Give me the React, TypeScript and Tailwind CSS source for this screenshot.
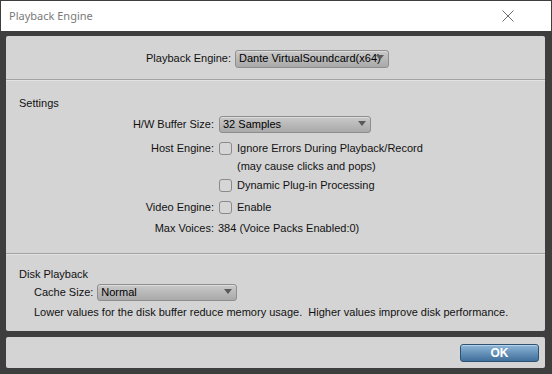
const Arrow = () => (
  <svg width="8" height="5" viewBox="0 0 8 5" className="absolute right-[4px] top-[4px]">
    <path d="M0 0 H8 L4 5 Z" fill="#5a5a5a" />
  </svg>
);

const Dropdown = ({ value, className }: { value: string; className: string }) => (
  <div
    className={`relative flex items-center pl-[3px] rounded-[3px] border border-[#8e8e8e] bg-gradient-to-b from-[#c9c9c9] to-[#a9a9a9] text-black whitespace-nowrap overflow-hidden shadow-[inset_0_1px_0_#dcdcdc] ${className}`}
  >
    <span className="leading-none">{value}</span>
    <Arrow />
  </div>
);

const Check = () => (
  <div className="w-[13px] h-[13px] rounded-[3px] border border-[#8a8a8a] bg-[#d6d6d6] shrink-0" />
);

const Separator = () => (
  <div className="h-[2px] border-t border-[#a3a3a3] border-b border-b-[#e2e2e2]" />
);

const Row = ({ label, children, className = "" }: { label?: string; children: React.ReactNode; className?: string }) => (
  <div className={`flex items-center ${className}`}>
    <div className="w-[213px] shrink-0 text-right pr-[5px]">{label}</div>
    <div className="flex items-center gap-[5px] whitespace-nowrap">{children}</div>
  </div>
);

export default function App() {
  return (
    <div className="w-[552px] h-[374px] bg-[#3e3e3e] border border-[#3e3e3e] flex flex-col text-[11px] text-[#111] font-['Liberation_Sans',Arial,sans-serif]">
      {/* title bar */}
      <div className="h-[30px] bg-white flex items-center justify-between pl-[8px] pr-[37px] shrink-0">
        <span className="text-[11px] text-[#7a7a7a] font-['Noto_Sans','Open_Sans',sans-serif]">Playback Engine</span>
        <svg width="12" height="12" viewBox="0 0 12 12">
          <path d="M0.5 0.5 L11.5 11.5 M11.5 0.5 L0.5 11.5" stroke="#6b6b6b" strokeWidth="1" />
        </svg>
      </div>

      <div className="flex-1 flex flex-col pt-[5px] pl-[5px] pr-[6px] pb-[5px]">
        {/* main panel */}
        <div className="h-[295px] bg-[#d4d4d4] rounded-[2px] flex flex-col">
          <div className="h-[43px] flex items-center pl-[140px] pt-[2px] whitespace-nowrap">
            <span className="mr-[4px]">Playback Engine:</span>
            <Dropdown value="Dante VirtualSoundcard(x64)" className="w-[154px] h-[18px]" />
          </div>
          <Separator />

          <div className="flex flex-col">
            <div className="pl-[13px] pt-[15px] h-[29px] flex items-end leading-[14px]">Settings</div>
            <Row label="H/W Buffer Size:" className="mt-[6px] h-[17px]">
              <Dropdown value="32 Samples" className="w-[152px] h-[17px]" />
            </Row>
            <Row label="Host Engine:" className="mt-[6px] h-[18px]">
              <Check />
              <span>Ignore Errors During Playback/Record</span>
            </Row>
            <Row className="h-[19px]">
              <span className="pl-[18px]">(may cause clicks and pops)</span>
            </Row>
            <Row className="h-[18px]">
              <Check />
              <span>Dynamic Plug-in Processing</span>
            </Row>
            <Row label="Video Engine:" className="mt-[4px] h-[18px]">
              <Check />
              <span>Enable</span>
            </Row>
            <Row label="Max Voices:" className="mt-[3px] h-[18px]">
              <span className="-ml-[1px]">384 (Voice Packs Enabled:0)</span>
            </Row>
          </div>

          <div className="mt-[16px]">
            <Separator />
          </div>

          <div className="flex flex-col pl-[13px] whitespace-nowrap">
            <div className="mt-[12px] h-[14px] leading-[14px]">Disk Playback</div>
            <div className="mt-[3px] flex items-center pl-[15px] h-[17px]">
              <span className="mr-[4px]">Cache Size:</span>
              <Dropdown value="Normal" className="w-[140px] h-[17px]" />
            </div>
            <div className="mt-[4px] pl-[15px] h-[14px] leading-[14px]">
              Lower values for the disk buffer reduce memory usage.&nbsp; Higher values improve disk performance.
            </div>
          </div>
        </div>

        {/* footer panel */}
        <div className="mt-[6px] h-[31px] bg-[#d4d4d4] rounded-[2px] flex items-center justify-end pr-[6px]">
          <button className="w-[79px] h-[18px] rounded-[3px] border border-[#2d5274] bg-gradient-to-b from-[#8fb7d8] to-[#3f6f9b] text-white font-bold text-[12px] leading-none shadow-[inset_0_1px_0_#b7d2e8]">
            OK
          </button>
        </div>
      </div>
    </div>
  );
}
